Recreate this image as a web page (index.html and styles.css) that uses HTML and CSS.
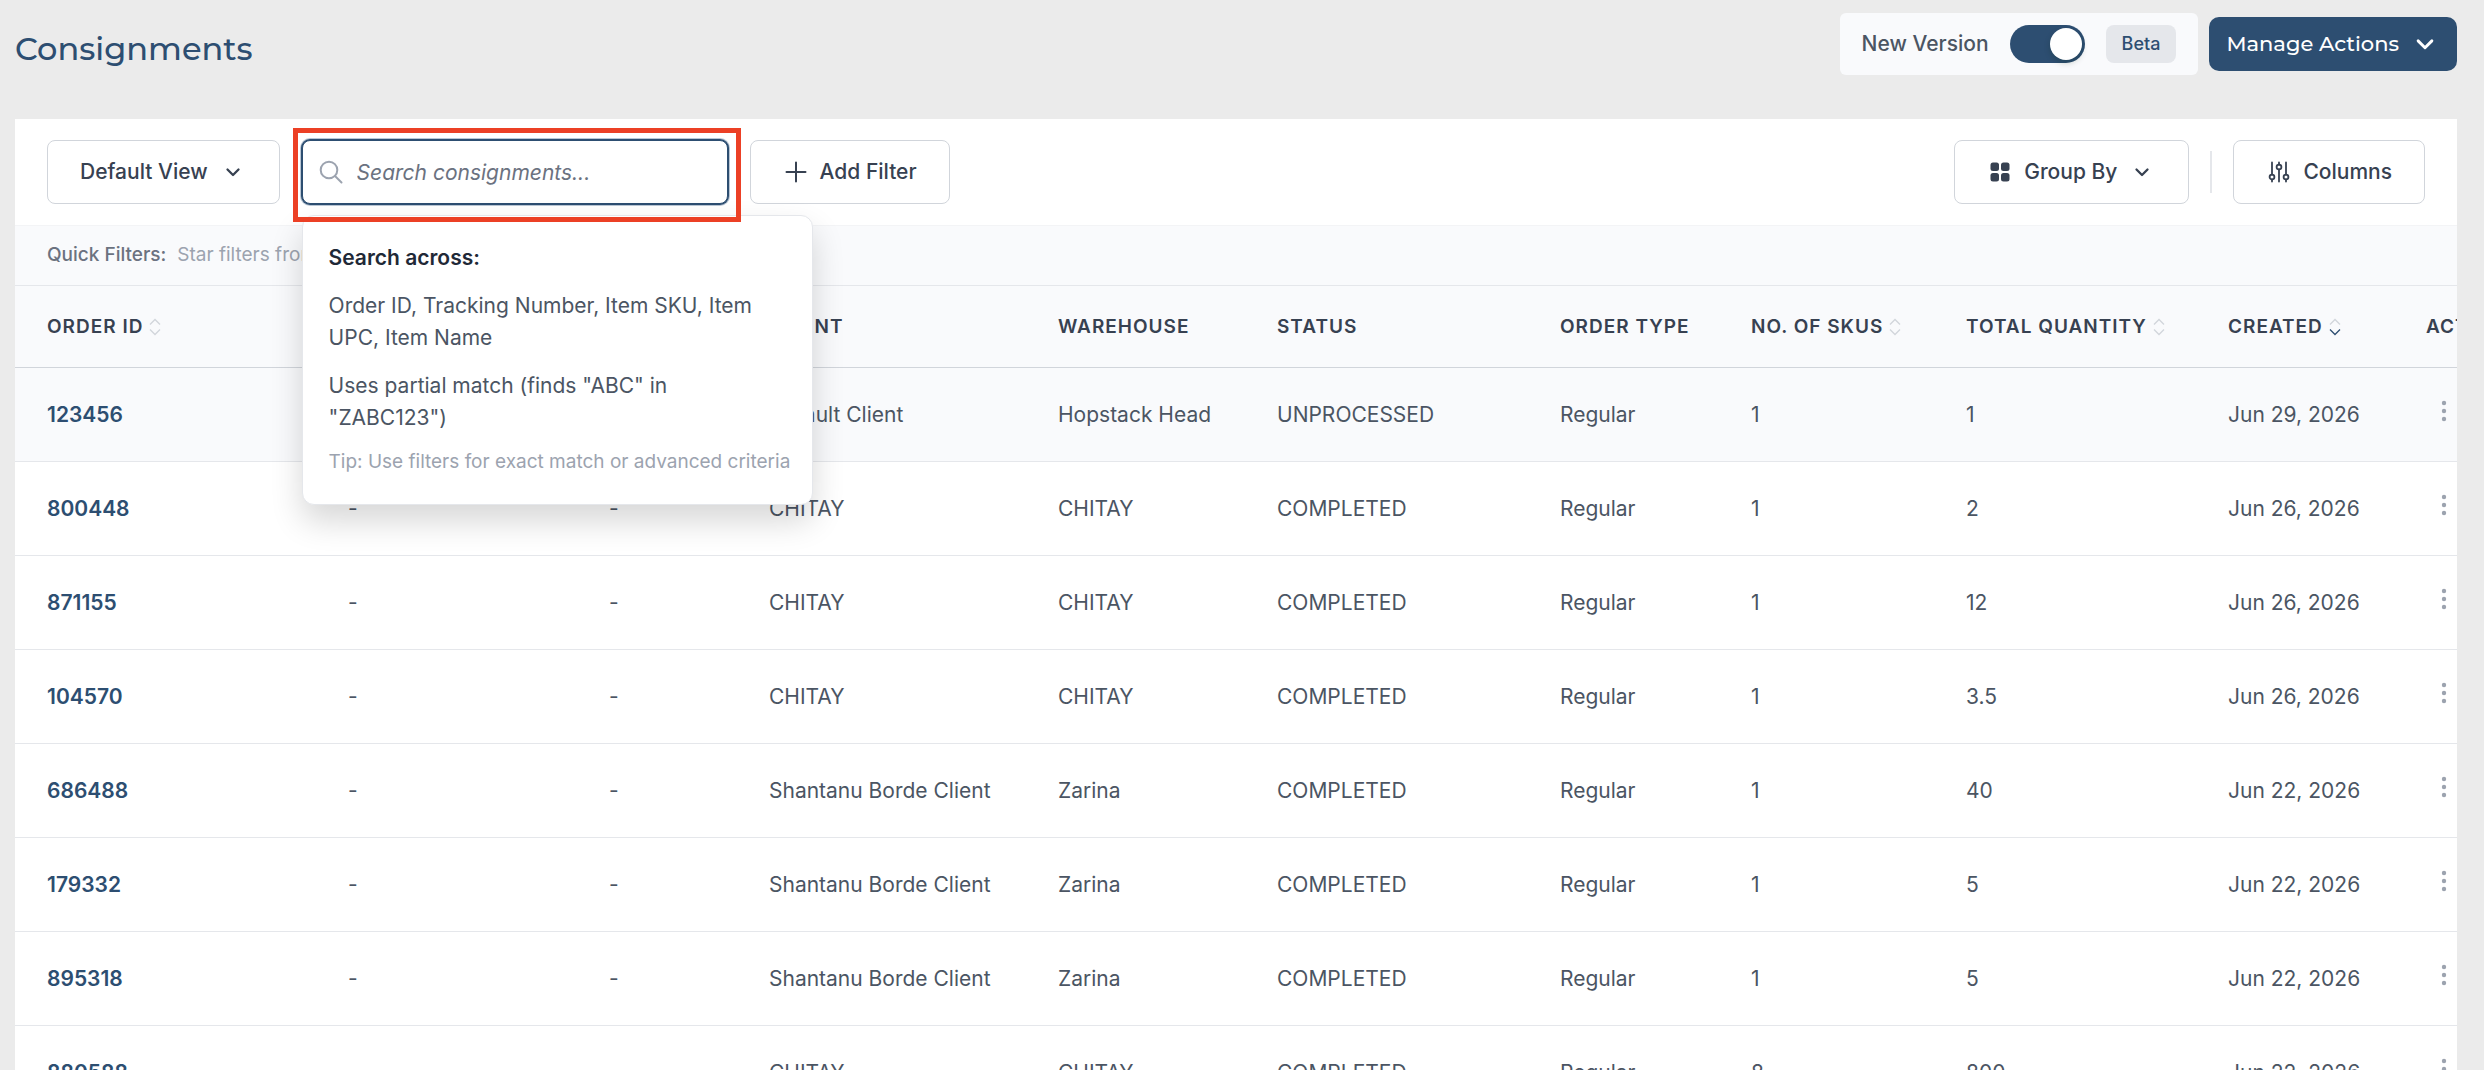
FILE: index.html
```html
<!DOCTYPE html>
<html lang="en">
<head>
<meta charset="utf-8">
<meta name="viewport" content="width=device-width, initial-scale=1">
<title>Consignments</title>
<link rel="stylesheet" href="styles.css">
</head>
<body>
<svg class="sprite" aria-hidden="true">
  <symbol id="chevron" viewBox="0 0 16 16"><path d="M2.500 5.500 8 11l5.500-5.500" fill="none" stroke="currentColor" stroke-width="2.300" stroke-linecap="round" stroke-linejoin="round"/></symbol>
  <symbol id="sort" viewBox="0 0 12 18"><path d="M1 6.500 6 1.500l5 5" fill="none" stroke="#d1d5db" stroke-width="1.300"/><path d="M1 11.500l5 5 5-5" fill="none" stroke="currentColor" stroke-width="1.300"/></symbol>
  <symbol id="dots" viewBox="0 0 6 22"><circle cx="3" cy="3" r="2.200"/><circle cx="3" cy="11" r="2.200"/><circle cx="3" cy="19" r="2.200"/></symbol>
</svg>

<header class="page-header">
  <h1>Consignments</h1>
  <div class="header-actions">
    <div class="version">
      <label for="new-version">New Version</label>
      <input type="checkbox" role="switch" id="new-version" class="switch" checked>
      <span class="badge">Beta</span>
    </div>
    <button type="button" class="primary">Manage Actions <svg><use href="#chevron"/></svg></button>
  </div>
</header>

<main class="panel">
  <div class="toolbar">
    <button type="button" class="btn">Default View <svg class="chevron"><use href="#chevron"/></svg></button>
    <div class="search">
      <svg class="search-icon" viewBox="0 0 24 24" fill="none" stroke="currentColor" stroke-width="2" stroke-linecap="round"><circle cx="10" cy="10" r="8.300"/><path d="M16 16l6.500 6.500"/></svg>
      <input type="text" aria-label="Search consignments" aria-describedby="search-help" placeholder="Search consignments...">
      <div class="search-help" id="search-help" role="tooltip">
        <strong>Search across:</strong>
        <p>Order ID, Tracking Number, Item SKU, Item UPC, Item Name</p>
        <p>Uses partial match (finds "ABC" in "ZABC123")</p>
        <small>Tip: Use filters for exact match or advanced criteria</small>
      </div>
      <div class="callout"></div>
    </div>
    <button type="button" class="btn"><svg class="icon" viewBox="0 0 22 22" fill="none" stroke="currentColor" stroke-width="2" stroke-linecap="round"><path d="M11 1.500v19M1.500 11h19"/></svg>Add Filter</button>
    <div class="toolbar-end">
      <button type="button" class="btn"><svg class="icon" viewBox="0 0 22 22" fill="currentColor"><rect x="1.500" y="1.500" width="8.500" height="8.500" rx="2.500"/><rect x="12" y="1.500" width="8.500" height="8.500" rx="2.500"/><rect x="1.500" y="12" width="8.500" height="8.500" rx="2.500"/><rect x="12" y="12" width="8.500" height="8.500" rx="2.500"/></svg>Group By <svg class="chevron"><use href="#chevron"/></svg></button>
      <span class="divider"></span>
      <button type="button" class="btn"><svg class="icon" viewBox="0 0 22 22" fill="none" stroke="currentColor" stroke-width="1.800" stroke-linecap="round"><path d="M4 1.500v12M4 18.500v2M11 1.500v2M11 8.500v12M18 1.500v12M18 18.500v2"/><circle cx="4" cy="16" r="2.400"/><circle cx="11" cy="6" r="2.400"/><circle cx="18" cy="16" r="2.400"/></svg>Columns</button>
    </div>
  </div>

  <div class="quick-filters"><b>Quick Filters:</b><span>Star filters from the filter menu</span></div>

  <div class="table-wrap">
    <table>
      <colgroup><col class="c-id"><col class="c-track"><col class="c-carrier"><col class="c-client"><col class="c-house"><col class="c-status"><col class="c-type"><col class="c-skus"><col class="c-qty"><col class="c-date"><col class="c-act"></colgroup>
      <thead>
        <tr>
          <th scope="col">Order ID <svg class="sort"><use href="#sort"/></svg></th>
          <th scope="col">Tracking</th>
          <th scope="col">Carrier</th>
          <th scope="col">Client</th>
          <th scope="col">Warehouse</th>
          <th scope="col">Status</th>
          <th scope="col">Order Type</th>
          <th scope="col">No. of SKUs <svg class="sort"><use href="#sort"/></svg></th>
          <th scope="col">Total Quantity <svg class="sort"><use href="#sort"/></svg></th>
          <th scope="col" aria-sort="descending">Created <svg class="sort sorted"><use href="#sort"/></svg></th>
          <th scope="col">Actions</th>
        </tr>
      </thead>
      <tbody>
        <tr class="hovered"><td><a href="#">123456</a></td><td>-</td><td>-</td><td>Default Client</td><td>Hopstack Head</td><td>UNPROCESSED</td><td>Regular</td><td>1</td><td>1</td><td>Jun 29, 2026</td><td><button type="button" class="more" aria-label="Row actions"><svg><use href="#dots"/></svg></button></td></tr>
        <tr><td><a href="#">800448</a></td><td>-</td><td>-</td><td>CHITAY</td><td>CHITAY</td><td>COMPLETED</td><td>Regular</td><td>1</td><td>2</td><td>Jun 26, 2026</td><td><button type="button" class="more" aria-label="Row actions"><svg><use href="#dots"/></svg></button></td></tr>
        <tr><td><a href="#">871155</a></td><td>-</td><td>-</td><td>CHITAY</td><td>CHITAY</td><td>COMPLETED</td><td>Regular</td><td>1</td><td>12</td><td>Jun 26, 2026</td><td><button type="button" class="more" aria-label="Row actions"><svg><use href="#dots"/></svg></button></td></tr>
        <tr><td><a href="#">104570</a></td><td>-</td><td>-</td><td>CHITAY</td><td>CHITAY</td><td>COMPLETED</td><td>Regular</td><td>1</td><td>3.5</td><td>Jun 26, 2026</td><td><button type="button" class="more" aria-label="Row actions"><svg><use href="#dots"/></svg></button></td></tr>
        <tr><td><a href="#">686488</a></td><td>-</td><td>-</td><td>Shantanu Borde Client</td><td>Zarina</td><td>COMPLETED</td><td>Regular</td><td>1</td><td>40</td><td>Jun 22, 2026</td><td><button type="button" class="more" aria-label="Row actions"><svg><use href="#dots"/></svg></button></td></tr>
        <tr><td><a href="#">179332</a></td><td>-</td><td>-</td><td>Shantanu Borde Client</td><td>Zarina</td><td>COMPLETED</td><td>Regular</td><td>1</td><td>5</td><td>Jun 22, 2026</td><td><button type="button" class="more" aria-label="Row actions"><svg><use href="#dots"/></svg></button></td></tr>
        <tr><td><a href="#">895318</a></td><td>-</td><td>-</td><td>Shantanu Borde Client</td><td>Zarina</td><td>COMPLETED</td><td>Regular</td><td>1</td><td>5</td><td>Jun 22, 2026</td><td><button type="button" class="more" aria-label="Row actions"><svg><use href="#dots"/></svg></button></td></tr>
        <tr><td><a href="#">880588</a></td><td>-</td><td>-</td><td>CHITAY</td><td>CHITAY</td><td>COMPLETED</td><td>Regular</td><td>8</td><td>800</td><td>Jun 22, 2026</td><td><button type="button" class="more" aria-label="Row actions"><svg><use href="#dots"/></svg></button></td></tr>
      </tbody>
    </table>
  </div>
</main>
</body>
</html>
```
FILE: styles.css
```css
:root {
  --navy: #2d4e71;
  --ink: #374151;
  --body: #4b5563;
  --muted: #9ca3af;
  --line: #e5e7eb;
  --field: #d1d5db;
  --tint: #f9fafc;
}

* { box-sizing: border-box; }

body {
  margin: 0;
  height: 100vh;
  overflow: hidden;
  display: flex;
  flex-direction: column;
  background: #ebebeb;
  color: var(--body);
  font: 400 21px/32px Inter, "Liberation Sans", sans-serif;
}

button, input { font: inherit; }
svg { display: block; flex: none; }
.sprite { position: absolute; width: 0; height: 0; }

.page-header {
  display: flex;
  justify-content: space-between;
  align-items: flex-start;
  padding: 13px 27px 44px 15px;
}

h1 {
  margin: 16px 0 0;
  color: var(--navy);
  font: 500 32px/40px Montserrat, Inter, sans-serif;
}

.header-actions { display: flex; align-items: center; gap: 11px; }

.version {
  display: flex;
  align-items: center;
  gap: 21px;
  padding: 12px 22px;
  border-radius: 6px;
  background: var(--tint);
  font-weight: 500;
}

.switch {
  appearance: none;
  display: flex;
  align-items: center;
  justify-content: flex-end;
  width: 75px;
  height: 38px;
  margin: 0;
  padding: 3px;
  border-radius: 19px;
  background: var(--navy);
}
.switch::before {
  content: "";
  width: 32px;
  height: 32px;
  border-radius: 50%;
  background: #fff;
  box-shadow: 0 3px 6px rgba(0, 35, 11, .2);
}

.badge {
  padding: 3px 16px;
  border-radius: 8px;
  background: var(--line);
  color: var(--navy);
  font-size: 18px;
}

.primary {
  display: flex;
  align-items: center;
  gap: 16px;
  height: 54px;
  padding: 0 22px 0 17px;
  border: 0;
  border-radius: 10px;
  background: var(--navy);
  color: #fff;
  font: 500 21px/32px Montserrat, Inter, sans-serif;
}
.primary svg { width: 20px; height: 20px; }

.chevron { width: 16px; height: 16px; margin: 0 6px 0 4px; }
.icon { width: 22px; height: 22px; margin-left: 2px; }

.panel {
  flex: 1;
  min-height: 0;
  display: flex;
  flex-direction: column;
  margin: 0 27px 0 15px;
  background: #fff;
}

.toolbar {
  display: flex;
  align-items: center;
  gap: 22px;
  padding: 21px 32px;
  border-bottom: 1px solid #f3f4f6;
}
.toolbar-end { display: flex; align-items: center; gap: 21px; margin-left: auto; }
.divider { width: 2px; height: 42px; background: var(--line); }

.btn {
  display: flex;
  align-items: center;
  gap: 13px;
  height: 64px;
  padding: 0 32px;
  border: 1px solid var(--field);
  border-radius: 8px;
  background: #fff;
  color: var(--ink);
  font-weight: 500;
}

.search { position: relative; width: 426px; }
.search input {
  display: block;
  width: 100%;
  height: 64px;
  padding: 0 20px 0 54px;
  border: 1px solid var(--navy);
  border-radius: 8px;
  outline: 0;
  background: #fff;
  box-shadow: 0 0 0 1px var(--navy), 0 0 0 2px #b9c6d4;
  color: var(--ink);
}
.search input::placeholder { color: #6b7280; font-style: italic; opacity: 1; }
.search-icon {
  position: absolute;
  left: 17px;
  top: 20px;
  width: 24px;
  height: 24px;
  color: var(--muted);
}

.search-help {
  position: absolute;
  z-index: 2;
  top: 75px;
  left: 0;
  width: 511px;
  padding: 26px;
  border: 1px solid var(--line);
  border-radius: 12px;
  background: #fff;
  box-shadow: 0 16px 32px rgba(0, 0, 0, .16);
}
.search-help strong { display: block; color: #1f2937; font-weight: 600; }
.search-help p { margin: 16px 0 0; }
.search-help small { display: block; margin-top: 12px; color: var(--muted); font-size: 19px; white-space: nowrap; }

.callout {
  position: absolute;
  z-index: 3;
  inset: -12px -13px -18px -9px;
  border: 5px solid #ec4025;
  pointer-events: none;
}

.quick-filters {
  display: flex;
  align-items: center;
  gap: 11px;
  padding: 13px 32px 14px;
  border-bottom: 1px solid var(--line);
  background: var(--tint);
  color: var(--muted);
  font-size: 19px;
}
.quick-filters b { color: #6b7280; font-weight: 500; }

.table-wrap { flex: 1; min-height: 0; overflow: hidden; }

table { width: 2519px; min-width: 100%; table-layout: fixed; border-collapse: separate; border-spacing: 0; }
.c-id { width: 301px; }
.c-track { width: 261px; }
.c-carrier { width: 160px; }
.c-client { width: 289px; }
.c-house { width: 219px; }
.c-status { width: 283px; }
.c-type { width: 191px; }
.c-skus { width: 215px; }
.c-qty { width: 262px; }
.c-date { width: 198px; }
.c-act { width: 140px; }

th, td { padding: 0 0 0 32px; text-align: left; white-space: nowrap; }
th {
  height: 82px;
  border-bottom: 1px solid var(--field);
  background: var(--tint);
  color: var(--ink);
  font-size: 19px;
  font-weight: 600;
  letter-spacing: 1px;
  text-transform: uppercase;
}
td { height: 94px; border-bottom: 1px solid var(--line); }
td a { color: var(--navy); font-weight: 600; text-decoration: none; }
.hovered td { background: var(--tint); }

.sort { display: inline-block; width: 12px; height: 18px; vertical-align: -3px; color: var(--field); }
.sorted { color: var(--navy); }

.more {
  display: block;
  width: 36px;
  height: 36px;
  padding: 3px 15px 11px;
  border: 0;
  background: none;
  color: var(--muted);
}
.more svg { width: 6px; height: 22px; fill: currentColor; }
```
